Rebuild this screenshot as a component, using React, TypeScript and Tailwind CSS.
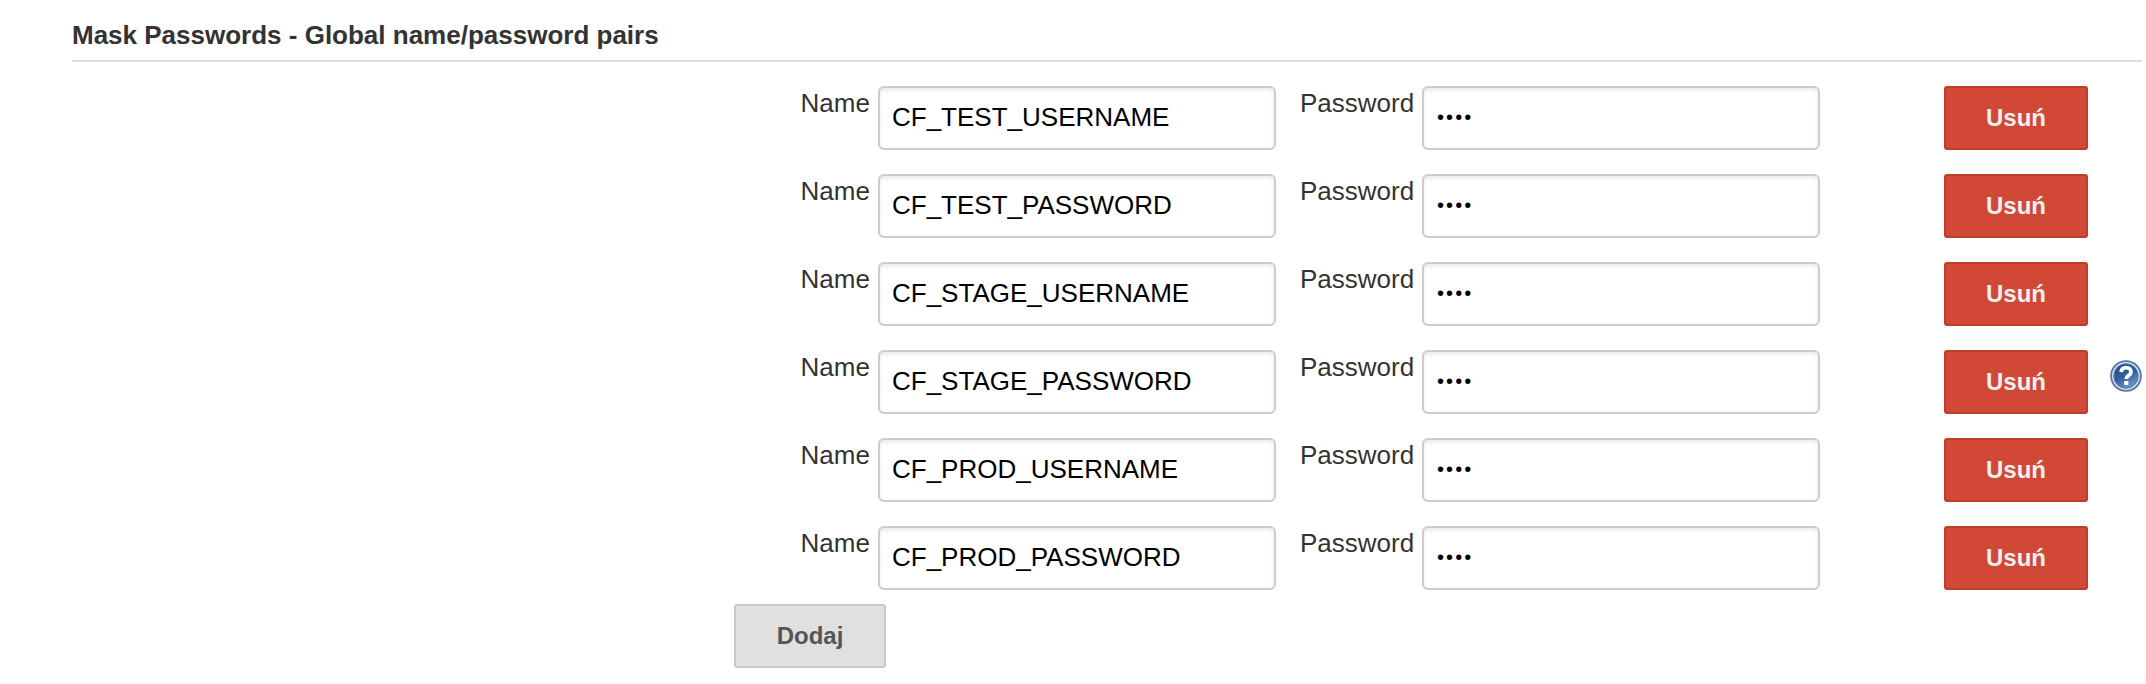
const names = [
  'CF_TEST_USERNAME',
  'CF_TEST_PASSWORD',
  'CF_STAGE_USERNAME',
  'CF_STAGE_PASSWORD',
  'CF_PROD_USERNAME',
  'CF_PROD_PASSWORD',
];

function Field({ label, value, secret = false }: { label: string; value: string; secret?: boolean }) {
  return (
    <div className="flex items-start">
      <span
        className={`pt-0.5 text-[26px] leading-[30px] text-[#333] ${secret ? 'w-[122px]' : 'w-[78px] pl-[0.5px]'}`}
      >
        {label}
      </span>
      <div
        role="textbox"
        aria-label={label}
        className={`h-16 w-[398px] rounded-md border-2 border-[#ccc] bg-white leading-[30px] text-black shadow-[inset_0_2px_4px_rgba(0,0,0,0.09)] ${
          secret ? 'pl-[13px] pt-[14px] text-[20px] tracking-[2.1px]' : 'px-3 pt-[14px] text-[26px]'
        }`}
      >
        {value}
      </div>
    </div>
  );
}

function HelpIcon() {
  return (
    <svg className="mt-[22px]" width="32" height="32" viewBox="0 0 32 32" aria-label="Help">
      <defs>
        <linearGradient id="help-fill" x1="0.2" y1="0" x2="0.7" y2="1">
          <stop offset="0" stopColor="#1d4a87" />
          <stop offset="0.5" stopColor="#30609f" />
          <stop offset="1" stopColor="#7c9ccb" />
        </linearGradient>
      </defs>
      <circle cx="16" cy="16" r="14.9" fill="#d3deee" stroke="#5475a6" strokeWidth="1.8" />
      <circle cx="16" cy="16" r="12.2" fill="url(#help-fill)" stroke="#4f73a8" strokeWidth="1" />
      <path
        d="M11.2 12.2c.2-3.2 2-4.6 4.9-4.6s4.9 1.6 4.9 4.3c0 3.6-4.7 3.4-4.7 7"
        fill="none"
        stroke="#fff"
        strokeWidth="3.8"
      />
      <rect x="14.2" y="20.9" width="4.2" height="4.2" rx="0.8" fill="#fff" />
    </svg>
  );
}

export default function App() {
  return (
    <main className="h-[684px] w-[2146px] overflow-hidden bg-white pl-[72px] pr-1 font-['Liberation_Sans',Arial,sans-serif]">
      <h1 className="h-[62px] border-b-2 border-[#ddd] pt-5 text-[26px] font-bold leading-[30px] text-[#333]">
        Mask Passwords - Global name/password pairs
      </h1>
      <div className="flex items-center justify-between pl-[662px]">
        <div className="pt-6">
          <div className="flex flex-col gap-6 pl-[66px]">
            {names.map((name) => (
              <div key={name} className="flex items-start">
                <Field label="Name" value={name} />
                <div className="ml-6">
                  <Field label="Password" value="••••" secret />
                </div>
                <button className="ml-[124px] h-16 w-36 rounded-[3px] border-2 border-[#c03b2c] bg-[#d14836] text-2xl font-bold leading-7 text-[#f0f0f0]">
                  Usuń
                </button>
              </div>
            ))}
          </div>
          <button className="mt-[14px] h-16 w-[152px] rounded-[3px] border-2 border-[#c8c8c8] bg-[#e0e0e0] text-2xl font-bold leading-7 text-[#555]">
            Dodaj
          </button>
        </div>
        <HelpIcon />
      </div>
    </main>
  );
}
